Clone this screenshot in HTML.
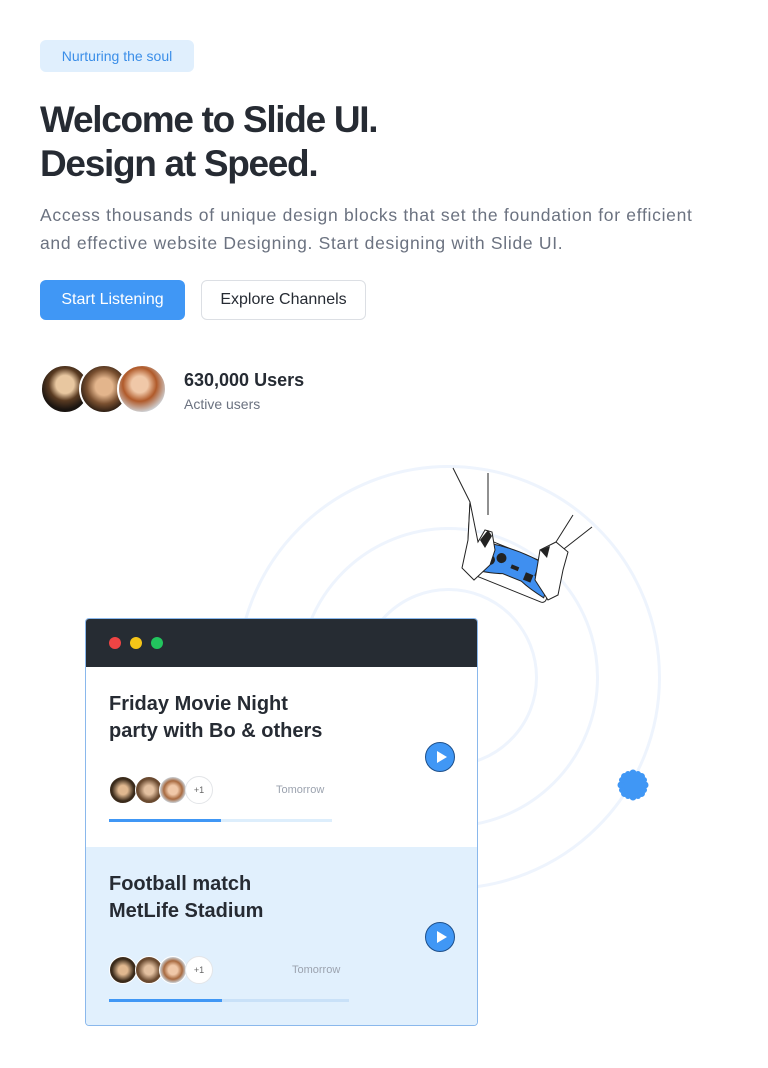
<!DOCTYPE html>
<html><head><meta charset="utf-8"><style>
*{box-sizing:border-box;margin:0;padding:0}
body{width:768px;height:1068px;background:#fff;font-family:"Liberation Sans",sans-serif;position:relative;overflow:hidden;color:#262b33}
.abs{position:absolute}
.badge{left:40px;top:40px;height:32px;width:154px;background:#e0effd;border-radius:6px;color:#3b8ee8;font-size:14px;line-height:32px;text-align:center}
h1{position:absolute;left:40px;top:98px;font-size:37px;line-height:44px;font-weight:700;letter-spacing:-1.3px;color:#262b33}
.p{left:40px;top:201px;width:720px;font-size:17.5px;line-height:28px;color:#6b7280;letter-spacing:0.7px;white-space:nowrap}
.b1{left:40px;top:280px;width:145px;height:40px;background:#4097f5;color:#fff;border-radius:6px;font-size:16px;line-height:40px;text-align:center}
.b2{left:201px;top:280px;width:165px;height:40px;border:1px solid #dcdfe4;border-radius:6px;font-size:16px;line-height:38px;text-align:center;color:#262b33}
.av{position:absolute;border-radius:50%;border:2px solid #fff}
.ring{position:absolute;border-radius:50%;border:3px solid #eef4fd}
.card{left:85px;top:618px;width:393px;height:408px;border:1px solid #8ab8ec;border-radius:4px;overflow:hidden;background:#fff}
.bar{height:48px;background:#262c33;position:relative}
.dot{position:absolute;top:18px;width:12px;height:12px;border-radius:50%}
.t{position:absolute;left:23px;font-size:20px;line-height:27px;font-weight:700;color:#262b33}
.play{position:absolute;width:30px;height:30px;border-radius:50%;background:#4097f5;border:1px solid #1d4f8a}
.play:after{content:"";position:absolute;left:11px;top:8px;border-left:10px solid #fff;border-top:6px solid transparent;border-bottom:6px solid transparent}
.sm{position:absolute;width:28px;height:28px;border-radius:50%;border:1px solid #fff}
.plus{position:absolute;width:28px;height:28px;border-radius:50%;border:1px solid #e3e5e8;background:#fff;font-size:9px;line-height:26px;text-align:center;color:#666}
.tm{position:absolute;font-size:11px;color:#9ca3af}
.track{position:absolute;left:23px;height:3px;background:#ddeefc}
.track i{position:absolute;left:0;top:0;height:3px;background:#4097f5;width:50%}
</style></head><body>
<div class="abs badge">Nurturing the soul</div>
<h1>Welcome to Slide UI.<br>Design at Speed.</h1>
<div class="abs p">Access thousands of unique design blocks that set the foundation for efficient<br>and effective website Designing. Start designing with Slide UI.</div>
<div class="abs b1">Start Listening</div>
<div class="abs b2">Explore Channels</div>
<div class="av" style="left:40px;top:364px;width:50px;height:50px;background:radial-gradient(circle at 50% 40%,#e8c7a0 0 25%,#5a3b22 45%,#1a1410 70%)"></div>
<div class="av" style="left:79px;top:364px;width:50px;height:50px;background:radial-gradient(circle at 50% 45%,#e3b58c 0 25%,#7a5030 50%,#2a1c12 75%)"></div>
<div class="av" style="left:117px;top:364px;width:50px;height:50px;background:radial-gradient(circle at 45% 40%,#f0c8a8 0 22%,#b05a2a 45%,#d0d4d8 75%)"></div>
<div class="abs" style="left:184px;top:370px;font-size:18px;font-weight:700;color:#262b33">630,000 Users</div>
<div class="abs" style="left:184px;top:396px;font-size:14px;color:#6b7280">Active users</div>
<div class="ring" style="left:236px;top:465px;width:425px;height:425px"></div>
<div class="ring" style="left:298px;top:527px;width:301px;height:301px"></div>
<div class="ring" style="left:359px;top:588px;width:179px;height:179px"></div>
<svg class="abs" style="left:440px;top:460px" width="160" height="150" viewBox="0 0 160 150">
<g fill="none" stroke="#222" stroke-width="1">
<path d="M13 8 L30 42 L28 80"/>
<path d="M48 13 L48 55"/>
<path d="M152 67 L120 92"/>
<path d="M133 55 L116 82"/>
</g>
<g transform="rotate(22 75 110)">
<rect x="35" y="92" width="80" height="38" rx="4" fill="#fff" stroke="#222"/>
<path d="M40 95 Q75 88 110 95 L112 125 Q95 122 85 118 L65 118 Q55 122 38 125 Z" fill="#3f8ff0" stroke="#222"/>
<circle cx="48" cy="110" r="5" fill="#222"/><circle cx="58" cy="104" r="5" fill="#222"/>
<rect x="70" y="106" width="8" height="4" fill="#222"/>
<rect x="86" y="108" width="8" height="8" fill="#222"/><rect x="95" y="100" width="8" height="8" fill="#222"/>
</g>
<path d="M30 42 L28 80 L22 108 L34 120 L50 105 L55 90 L52 72 L45 70 L38 82 Z" fill="#fff" stroke="#222"/>
<path d="M40 80 L48 70 L52 76 L45 88 Z" fill="#222"/>
<path d="M116 82 L100 90 L95 120 L108 140 L118 135 L123 110 L128 92 Z" fill="#fff" stroke="#222"/>
<path d="M100 90 L110 86 L107 98 Z" fill="#222"/>
</svg>
<svg class="abs" style="left:617px;top:769px" width="32" height="32" viewBox="0 0 32 32"><g fill="#4097f5"><circle cx="16" cy="16" r="10"/>
<circle cx="16" cy="4" r="3.5"/><circle cx="16" cy="28" r="3.5"/><circle cx="4" cy="16" r="3.5"/><circle cx="28" cy="16" r="3.5"/>
<circle cx="7.5" cy="7.5" r="3.5"/><circle cx="24.5" cy="24.5" r="3.5"/><circle cx="7.5" cy="24.5" r="3.5"/><circle cx="24.5" cy="7.5" r="3.5"/>
<circle cx="11" cy="5" r="3"/><circle cx="21" cy="5" r="3"/><circle cx="11" cy="27" r="3"/><circle cx="21" cy="27" r="3"/><circle cx="5" cy="11" r="3"/><circle cx="5" cy="21" r="3"/><circle cx="27" cy="11" r="3"/><circle cx="27" cy="21" r="3"/></g></svg>
<div class="abs card">
<div class="bar"><div class="dot" style="left:23px;background:#ef4444"></div><div class="dot" style="left:44px;background:#f5c518"></div><div class="dot" style="left:65px;background:#22c55e"></div></div>
<div class="t" style="top:72px">Friday Movie Night<br>party with Bo &amp; others</div>
<div class="play" style="left:339px;top:123px"></div>
<div class="sm" style="left:23px;top:157px;background:radial-gradient(circle,#e0b890 0 25%,#3a2a1a 60%)"></div>
<div class="sm" style="left:49px;top:157px;background:radial-gradient(circle,#e3c0a0 0 25%,#6a4a30 60%)"></div>
<div class="sm" style="left:73px;top:157px;background:radial-gradient(circle,#f0c8a8 0 25%,#a86a40 50%,#c8ccd0 70%)"></div>
<div class="plus" style="left:99px;top:157px">+1</div>
<div class="tm" style="left:190px;top:165px">Tomorrow</div>
<div class="track" style="top:200px;width:223px"><i></i></div>
<div style="position:absolute;left:0;top:228px;width:393px;height:180px;background:#e1f0fd">
<div class="t" style="top:24px">Football match<br>MetLife Stadium</div>
<div class="play" style="left:339px;top:75px"></div>
<div class="sm" style="left:23px;top:109px;background:radial-gradient(circle,#e0b890 0 25%,#3a2a1a 60%)"></div>
<div class="sm" style="left:49px;top:109px;background:radial-gradient(circle,#e3c0a0 0 25%,#6a4a30 60%)"></div>
<div class="sm" style="left:73px;top:109px;background:radial-gradient(circle,#f0c8a8 0 25%,#a86a40 50%,#c8ccd0 70%)"></div>
<div class="plus" style="left:99px;top:109px">+1</div>
<div class="tm" style="left:206px;top:117px">Tomorrow</div>
<div class="track" style="top:152px;width:240px;background:#c9e1f8"><i style="width:47%"></i></div>
</div>
</div>
</body></html>
